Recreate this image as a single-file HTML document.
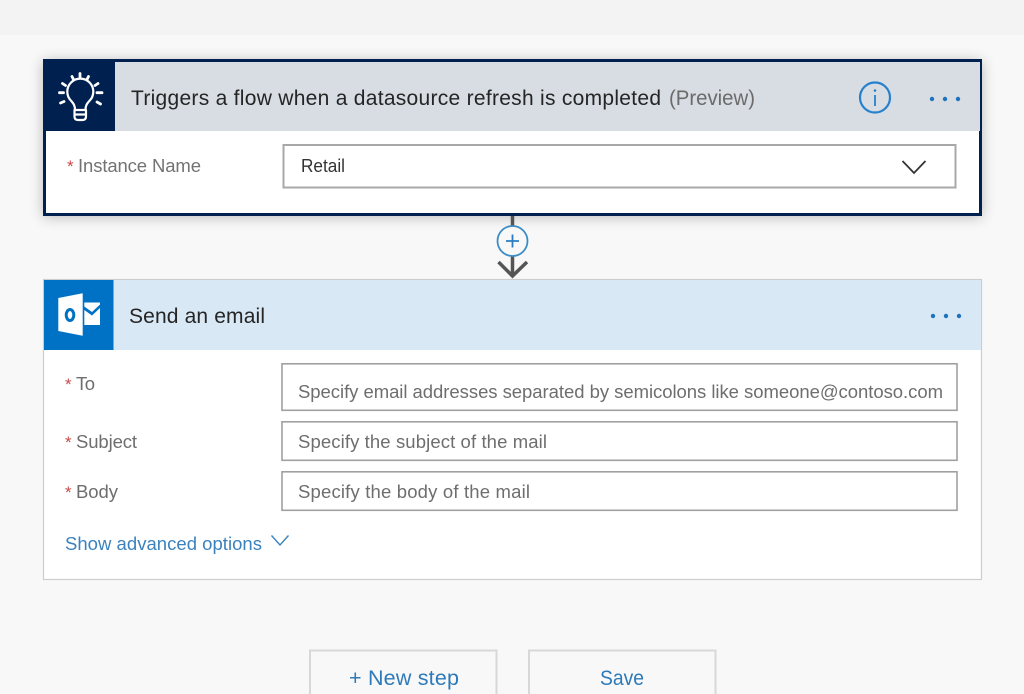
<!DOCTYPE html>
<html>
<head>
<meta charset="utf-8">
<style>
html,body{margin:0;padding:0;width:1024px;height:694px;overflow:hidden;background:#f8f8f8}
svg{display:block;filter:blur(.35px)}
text{font-family:"Liberation Sans",sans-serif}
</style>
</head>
<body>
<svg width="1024" height="694" viewBox="0 0 1024 694" xmlns="http://www.w3.org/2000/svg">
<defs>
<filter id="sh" x="-5%" y="-20%" width="110%" height="140%"><feGaussianBlur stdDeviation="7"/></filter>
</defs>
<rect width="1024" height="694" fill="#f8f8f8"/>
<rect width="1024" height="35" fill="#f3f3f3"/>

<!-- Card 1 -->
<rect x="43" y="61" width="939" height="156" fill="#000" opacity=".25" filter="url(#sh)"/>
<rect x="44.500" y="60.500" width="936" height="154" fill="#fff" stroke="#002050" stroke-width="3"/>
<rect x="115" y="62" width="865" height="69" fill="#d7dde3"/>
<rect x="43" y="59" width="72" height="72" fill="#002050"/>
<g fill="none" stroke="#fff" stroke-linecap="round" stroke-linejoin="round">
<path stroke-width="2.200" d="M75 110C75 105.500 73.500 103.500 71.300 101A13 13 0 1 1 89.300 101C87 103.500 85.500 105.500 85.500 110Z"/>
<path stroke-width="2.200" d="M74.500 110V116.500Q74.500 120 78 120H82.500Q86 120 86 116.500V110M74.500 114.500H86"/>
<path stroke-width="2.800" d="M80 73.500V78M72 76.500L73.500 79.500M88.500 76.500L87 79.500M62.500 83.500L65.500 85.500M98 83.500L95 85.500M59.500 92.700H63.500M97 92.700H102M60.500 103L64 101.500M100.500 104L97 102"/>
</g>
<text x="131" y="105" font-size="21" fill="#252525" textLength="530" lengthAdjust="spacing">Triggers a flow when a datasource refresh is completed</text>
<text x="669" y="105" font-size="21" fill="#6b6b6b" textLength="86" lengthAdjust="spacingAndGlyphs">(Preview)</text>
<circle cx="875" cy="97.500" r="15" fill="none" stroke="#2680cc" stroke-width="2.200"/>
<path d="M875 95V106" stroke="#2680cc" stroke-width="1.800"/>
<circle cx="875" cy="90.500" r="1.300" fill="#2680cc"/>
<g fill="#1f72bd"><circle cx="932" cy="99" r="2.200"/><circle cx="945" cy="99" r="2.200"/><circle cx="958" cy="99" r="2.200"/></g>
<text x="67" y="172" font-size="17" fill="#c8494a">*</text>
<text x="78" y="172" font-size="18.500" fill="#737373" textLength="123" lengthAdjust="spacing">Instance Name</text>
<rect x="283.500" y="145" width="672" height="42.500" fill="#fff" stroke="#a8a8a8" stroke-width="2"/>
<text x="301" y="172" font-size="18.500" fill="#333" textLength="44" lengthAdjust="spacingAndGlyphs">Retail</text>
<path d="M902.500 161L914 173L925.500 161" fill="none" stroke="#333" stroke-width="1.800"/>

<!-- Connector -->
<path d="M512.500 216V276" stroke="#555" stroke-width="3.500"/>
<path d="M498.500 262L512.500 276L527 262" fill="none" stroke="#555" stroke-width="3.500"/>
<circle cx="512.500" cy="241" r="15" fill="#f8f8f8" stroke="#3c8cc6" stroke-width="1.800"/>
<path d="M512.500 234.500V247.500M506 241H519" stroke="#2b7cc4" stroke-width="1.800"/>

<!-- Card 2 -->
<rect x="43.500" y="279.500" width="938" height="300" fill="#fff" stroke="#cdcdcd" stroke-width="1.200"/>
<rect x="44" y="280" width="937" height="70" fill="#d8e8f5"/>
<rect x="44" y="280" width="69.500" height="70" fill="#0072c6"/>
<path d="M58.300 298L82.700 293.300V335.700L58.300 331Z" fill="#fff"/>
<path d="M84.300 302.500H100V304.500L92 312L84.300 306.500Z" fill="#fff"/>
<path d="M84.300 310L92 315.500L100 308V325H84.300Z" fill="#fff"/>
<ellipse cx="70" cy="315" rx="3.800" ry="5.500" fill="none" stroke="#0072c6" stroke-width="3"/>
<text x="129" y="323" font-size="21" fill="#252525" textLength="136" lengthAdjust="spacing">Send an email</text>
<g fill="#1f72bd"><circle cx="933" cy="316" r="2.200"/><circle cx="946" cy="316" r="2.200"/><circle cx="959" cy="316" r="2.200"/></g>

<text x="65" y="390" font-size="17" fill="#c8494a">*</text>
<text x="76" y="390" font-size="18.500" fill="#6e6e6e" textLength="19" lengthAdjust="spacing">To</text>
<rect x="282" y="363.800" width="675" height="46.500" fill="#fff" stroke="#a0a0a0" stroke-width="1.600"/>
<text x="298" y="398" font-size="18.500" fill="#6e6e6e" textLength="645" lengthAdjust="spacing">Specify email addresses separated by semicolons like someone@contoso.com</text>

<text x="65" y="448" font-size="17" fill="#c8494a">*</text>
<text x="76" y="448" font-size="18.500" fill="#6e6e6e" textLength="61" lengthAdjust="spacing">Subject</text>
<rect x="282" y="421.800" width="675" height="38.500" fill="#fff" stroke="#a0a0a0" stroke-width="1.600"/>
<text x="298" y="448" font-size="18.500" fill="#6e6e6e" textLength="249" lengthAdjust="spacing">Specify the subject of the mail</text>

<text x="65" y="498" font-size="17" fill="#c8494a">*</text>
<text x="76" y="498" font-size="18.500" fill="#6e6e6e" textLength="42" lengthAdjust="spacing">Body</text>
<rect x="282" y="471.800" width="675" height="38.500" fill="#fff" stroke="#a0a0a0" stroke-width="1.600"/>
<text x="298" y="498" font-size="18.500" fill="#6e6e6e" textLength="232" lengthAdjust="spacing">Specify the body of the mail</text>

<text x="65" y="550" font-size="18.500" fill="#3b82bd" textLength="197" lengthAdjust="spacing">Show advanced options</text>
<path d="M271.500 535.500L280 545L288.500 535.500" fill="none" stroke="#3b82bd" stroke-width="1.400"/>

<!-- Buttons -->
<rect x="310" y="650.500" width="186.500" height="60" fill="#f8f8f8" stroke="#d8d8d8" stroke-width="2"/>
<rect x="529" y="650.500" width="186.500" height="60" fill="#f8f8f8" stroke="#d8d8d8" stroke-width="2"/>
<text x="349" y="685" font-size="21.500" fill="#2e7ab8" textLength="110" lengthAdjust="spacing">+ New step</text>
<text x="600" y="685" font-size="21.500" fill="#2e7ab8" textLength="44" lengthAdjust="spacingAndGlyphs">Save</text>
</svg>
</body>
</html>
